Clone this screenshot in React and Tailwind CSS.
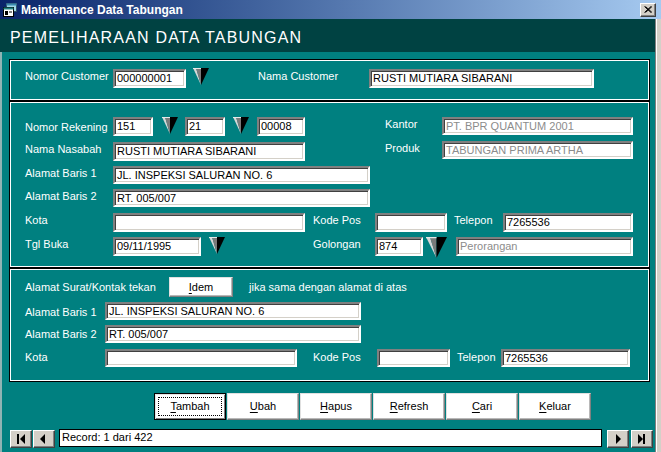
import React from "react";

const Label = ({ className = "", children }) => (
  <span
    className={`shrink-0 whitespace-nowrap text-[11px] leading-[14px] text-white ${className}`}
  >
    {children}
  </span>
);

const Field = ({ className = "", value = "", muted = false }) => (
  <div
    className={`shrink-0 overflow-hidden whitespace-nowrap border-2 border-t-[#808080] border-l-[#808080] border-b-white border-r-white bg-white px-[2px] text-[11px] leading-[14px] shadow-[inset_1px_1px_0_#404040,inset_-1px_-1px_0_#d4d0c8] ${
      muted ? "text-[#8c8c8c]" : "text-black"
    } ${className}`}
  >
    {value}
  </div>
);

const Arrow = ({ className = "w-[16px] h-[17px]" }) => (
  <svg viewBox="0 0 16 17" preserveAspectRatio="none" className={`shrink-0 ${className}`}>
    <polygon points="0,0 3,0 8,17" fill="#d8d8d8" />
    <polygon points="3,0 8,0 8,17" fill="#7a7a7a" />
    <polygon points="8,0 16,0 8,17" fill="#000" />
    <line x1="0" y1="0.5" x2="8" y2="0.5" stroke="#e8e8e8" strokeWidth="1" />
  </svg>
);

const Btn = ({ children, focus = false, className = "h-[27px] w-[72px]" }) => (
  <button
    className={`relative shrink-0 bg-white text-[11px] text-black ${
      focus
        ? "border border-black shadow-[inset_1px_1px_0_#e4e4e4,inset_-1px_-1px_0_#808080]"
        : "border border-t-[#e0e0e0] border-l-[#e0e0e0] border-b-[#808080] border-r-[#808080] shadow-[inset_-1px_-1px_0_#b8b8b8]"
    } ${className}`}
  >
    {focus && (
      <span className="pointer-events-none absolute inset-[3px] border border-dotted border-black" />
    )}
    {children}
  </button>
);

const NavBtn = ({ children }) => (
  <div className="mt-[1px] h-[18px] w-[22px] shrink-0 border border-t-white border-l-white border-b-[#404040] border-r-[#404040] bg-[#d4d0c8] shadow-[inset_-1px_-1px_0_#808080]">
    <svg viewBox="0 0 20 16" className="h-[16px] w-[20px]">
      {children}
    </svg>
  </div>
);

const Group = ({ className = "", children }) => (
  <div
    className={`ml-[7px] w-[641px] border border-black shadow-[inset_1px_1px_0_#fff,inset_-1px_-1px_0_#fff] ${className}`}
  >
    {children}
  </div>
);

const Row = ({ className = "", children }) => (
  <div className={`flex items-start pl-[15px] ${className}`}>{children}</div>
);

const u = (first, rest) => (
  <>
    <span className="underline underline-offset-2">{first}</span>
    {rest}
  </>
);

export default function App() {
  return (
    <div className="h-[452px] w-[661px] overflow-hidden bg-[#008080] font-['Liberation_Sans',Arial,sans-serif]">
      {/* title bar */}
      <div className="flex h-[19px] items-center bg-linear-to-r from-[#0a246a] to-[#a6caf0]">
        <svg viewBox="0 0 16 16" className="ml-[2px] h-[16px] w-[16px] shrink-0">
          <rect x="4.5" y="1.5" width="10" height="8" fill="#9fd8e8" stroke="#30506a" />
          <rect x="4.5" y="1.5" width="10" height="2" fill="#3a8ab0" />
          <rect x="1.5" y="5.5" width="10" height="9" fill="#fff" stroke="#000" />
          <rect x="1.5" y="5.5" width="10" height="2" fill="#208080" />
          <rect x="3" y="9" width="3" height="4" fill="#000" />
          <rect x="7" y="9" width="3" height="2" fill="#808080" />
        </svg>
        <span className="ml-[3px] whitespace-nowrap text-[12px] font-bold leading-[14px] text-white">
          Maintenance Data Tabungan
        </span>
        <div className="ml-auto mr-[5px] flex h-[14px] w-[16px] items-center justify-center border border-t-white border-l-white border-b-[#404040] border-r-[#404040] bg-[#d4d0c8] shadow-[inset_-1px_-1px_0_#808080]">
          <svg viewBox="0 0 8 7" className="h-[7px] w-[8px]">
            <path d="M0.5 0.5 L7 6.5 M1.5 0.5 L8 6.5 M7 0.5 L0.5 6.5 M8 0.5 L1.5 6.5" stroke="#000" strokeWidth="1" />
          </svg>
        </div>
      </div>

      <div className="flex">
        <div className="w-[655px]">
          {/* header */}
          <div className="h-[33px] bg-[#004242] pl-[10px] pt-[9px]">
            <div className="text-[16px] leading-[20px] tracking-[1.2px] text-white">
              PEMELIHARAAN DATA TABUNGAN
            </div>
          </div>

          {/* body */}
          <div className="h-[400px] border-l-2 border-[#8fb4b4] pt-[7px]">
            <Group className="h-[42px] pt-[9px]">
              <Row>
                <Label className="w-[88px]">Nomor Customer</Label>
                <Field className="h-[19px] w-[73px]" value="000000001" />
                <Arrow className="-mt-[1px] ml-[7px] h-[17px] w-[16px]" />
                <Label className="ml-[49px] w-[111px]">Nama Customer</Label>
                <Field className="h-[19px] w-[225px]" value="RUSTI MUTIARA SIBARANI" />
              </Row>
            </Group>

            <Group className="h-[167px] pt-[15px]">
              <Row className="h-[24px]">
                <Label className="mt-[3px] w-[88px]">Nomor Rekening</Label>
                <Field className="h-[19px] w-[40px]" value="151" />
                <Arrow className="ml-[9px] h-[17px] w-[16px]" />
                <Field className="ml-[7px] h-[19px] w-[40px]" value="21" />
                <Arrow className="ml-[8px] h-[17px] w-[16px]" />
                <Field className="ml-[8px] h-[19px] w-[48px]" value="00008" />
                <Label className="ml-[80px] w-[57px]">Kantor</Label>
                <Field className="h-[18px] w-[191px]" muted value="PT. BPR QUANTUM 2001" />
              </Row>
              <Row className="h-[25px]">
                <Label className="mt-[1px] w-[88px]">Nama Nasabah</Label>
                <Field className="mt-[1px] h-[19px] w-[192px]" value="RUSTI MUTIARA SIBARANI" />
                <Label className="ml-[80px] w-[57px]">Produk</Label>
                <Field className="h-[18px] w-[191px]" muted value="TABUNGAN PRIMA ARTHA" />
              </Row>
              <Row className="h-[23px]">
                <Label className="w-[88px]">Alamat Baris 1</Label>
                <Field className="h-[18px] w-[257px]" value="JL. INSPEKSI SALURAN NO. 6" />
              </Row>
              <Row className="h-[24px]">
                <Label className="w-[88px]">Alamat Baris 2</Label>
                <Field className="h-[18px] w-[257px]" value="RT. 005/007" />
              </Row>
              <Row className="h-[24px]">
                <Label className="w-[88px]">Kota</Label>
                <Field className="h-[19px] w-[192px]" />
                <Label className="ml-[8px] w-[62px]">Kode Pos</Label>
                <Field className="h-[19px] w-[72px]" />
                <Label className="ml-[7px] w-[49px]">Telepon</Label>
                <Field className="h-[19px] w-[130px]" value="7265536" />
              </Row>
              <Row className="h-[19px]">
                <Label className="w-[88px]">Tgl Buka</Label>
                <Field className="h-[19px] w-[88px]" value="09/11/1995" />
                <Arrow className="ml-[8px] h-[17px] w-[16px]" />
                <Label className="ml-[88px] w-[62px]">Golongan</Label>
                <Field className="h-[19px] w-[48px]" value="874" />
                <Arrow className="ml-[3px] h-[21px] w-[21px]" />
                <Field className="ml-[9px] h-[19px] w-[177px]" muted value="Perorangan" />
              </Row>
            </Group>

            <Group className="h-[114px] pt-[8px]">
              <Row className="h-[25px]">
                <Label className="mt-[3px] w-[144px]">Alamat Surat/Kontak tekan</Label>
                <Btn className="h-[20px] w-[64px]">{u("I", "dem")}</Btn>
                <Label className="ml-[16px] mt-[3px]">jika sama dengan alamat di atas</Label>
              </Row>
              <Row className="h-[23px]">
                <Label className="mt-[3px] w-[80px]">Alamat Baris 1</Label>
                <Field className="h-[18px] w-[256px]" value="JL. INSPEKSI SALURAN NO. 6" />
              </Row>
              <Row className="h-[24px]">
                <Label className="mt-[2px] w-[80px]">Alamat Baris 2</Label>
                <Field className="h-[18px] w-[256px]" value="RT. 005/007" />
              </Row>
              <Row className="h-[19px]">
                <Label className="mt-[1px] w-[80px]">Kota</Label>
                <Field className="h-[18px] w-[192px]" />
                <Label className="ml-[16px] mt-[1px] w-[64px]">Kode Pos</Label>
                <Field className="h-[18px] w-[73px]" />
                <Label className="ml-[7px] mt-[1px] w-[44px]">Telepon</Label>
                <Field className="h-[18px] w-[129px]" value="7265536" />
              </Row>
            </Group>

            {/* command buttons */}
            <div className="ml-[152px] mt-[11px] flex gap-[1px]">
              <Btn focus>{u("T", "ambah")}</Btn>
              <Btn>{u("U", "bah")}</Btn>
              <Btn>{u("H", "apus")}</Btn>
              <Btn>{u("R", "efresh")}</Btn>
              <Btn>{u("C", "ari")}</Btn>
              <Btn>{u("K", "eluar")}</Btn>
            </div>

            {/* record navigator */}
            <div className="ml-[8px] mt-[9px] flex items-start">
              <NavBtn>
                <rect x="6" y="3" width="2" height="10" fill="#000" />
                <polygon points="9,8 14,3 14,13" fill="#000" />
              </NavBtn>
              <div className="ml-[1px]">
                <NavBtn>
                  <polygon points="6,8 11,3 11,13" fill="#000" />
                </NavBtn>
              </div>
              <div className="ml-[4px] h-[18px] w-[543px] border border-black bg-white pl-[2px] text-[11px] leading-[15px] text-black">
                Record: 1 dari 422
              </div>
              <div className="ml-[5px]">
                <NavBtn>
                  <polygon points="8,3 13,8 8,13" fill="#000" />
                </NavBtn>
              </div>
              <div className="ml-[2px]">
                <NavBtn>
                  <polygon points="6,3 11,8 6,13" fill="#000" />
                  <rect x="11" y="3" width="2" height="10" fill="#000" />
                </NavBtn>
              </div>
            </div>
          </div>
        </div>
        {/* right window frame */}
        <div className="h-[433px] w-[6px] border-l border-[#808080] bg-[#d4d0c8] shadow-[inset_1px_0_0_#ffffff]" />
      </div>
    </div>
  );
}
